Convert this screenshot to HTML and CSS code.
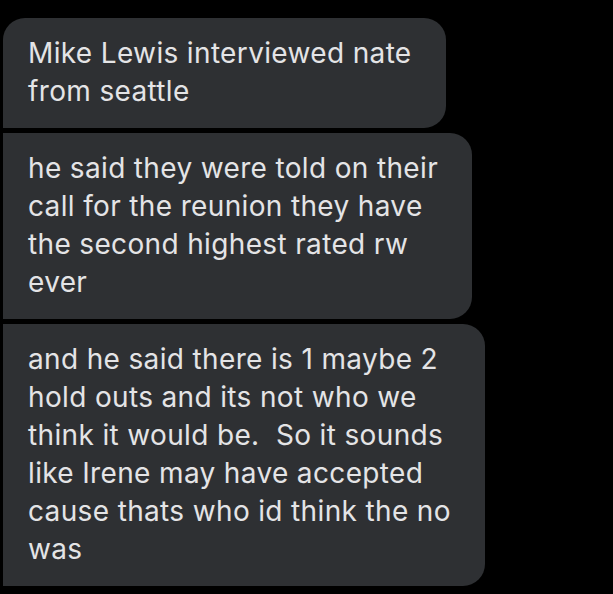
FILE: index.html
```html
<!DOCTYPE html>
<html lang="en">
<head>
  <meta charset="UTF-8">
  <meta name="viewport" content="width=device-width, initial-scale=1.0">
  <title>Messages</title>
  <link rel="stylesheet" href="styles.css">
</head>
<body>
  <div class="thread">
    <div class="bubble first">Mike Lewis interviewed nate<br>from seattle</div>
    <div class="bubble">he said they were told on their<br>call for the reunion they have<br>the second highest rated rw<br>ever</div>
    <div class="bubble">and he said there is 1 maybe 2<br>hold outs and its not who we<br>think it would be.&nbsp; So it sounds<br>like Irene may have accepted<br>cause thats who id think the no<br>was</div>
  </div>
</body>
</html>
```

FILE: styles.css
```css
body {
  margin: 0;
  background: #000;
  font-family: 'Inter', 'Roboto', sans-serif;
  color: #e4e4e6;
}

.thread {
  display: flex;
  flex-direction: column;
  align-items: flex-start;
  gap: 5px;
  padding: 18px 0 0 3px;
}

.bubble {
  background: #2e3033;
  font-size: 28px;
  line-height: 38px;
  letter-spacing: 0.35px;
  padding: 16px 34px 18px 25px;
  border-radius: 0 22px 22px 0;
  white-space: nowrap;
}

.bubble.first {
  border-top-left-radius: 22px;
}
```
